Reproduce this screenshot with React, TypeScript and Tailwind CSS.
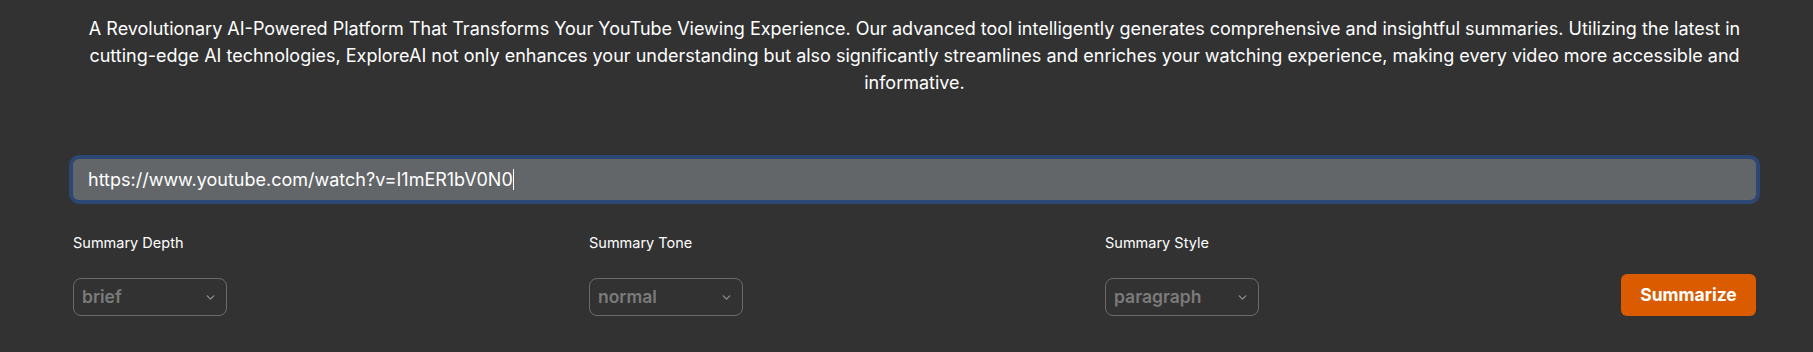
import { ChevronDown } from 'lucide-react';

const options = [
  { label: 'Summary Depth', value: 'brief' },
  { label: 'Summary Tone', value: 'normal' },
  { label: 'Summary Style', value: 'paragraph' },
];

function SelectBox({ label, value }: { label: string; value: string }) {
  return (
    <div className="flex flex-col">
      <span className="text-[14.5px] leading-[20px] text-white">{label}</span>
      <div className="mt-[25px] flex h-[38px] w-[154px] items-center justify-between rounded-lg border border-[#6b6b6b] pl-[8px] pr-[9px]">
        <span className="text-[17.5px] font-semibold text-[#7b7b7b]">{value}</span>
        <ChevronDown size={13} strokeWidth={2.5} className="text-[#8a8a8a]" />
      </div>
    </div>
  );
}

export default function App() {
  return (
    <div
      className="h-[352px] w-full overflow-hidden bg-[#323232] pl-[73px] pr-[57px]"
      style={{ fontFamily: 'Inter, "Noto Sans", sans-serif' }}
    >
      {/* intro */}
      <p className="pt-[15px] text-center text-[18px] leading-[27px] text-white">
        A Revolutionary AI-Powered Platform That Transforms Your YouTube Viewing Experience. Our advanced tool
        intelligently generates comprehensive and insightful summaries. Utilizing the latest in cutting-edge AI
        technologies, ExploreAI not only enhances your understanding but also significantly streamlines and enriches
        your watching experience, making every video more accessible and informative.
      </p>

      {/* url field */}
      <div className="mt-[63px] flex h-[41px] items-center rounded-md bg-[#636669] px-[15px] ring-4 ring-[#2b4773]">
        <span className="text-[18px] text-white">https://www.youtube.com/watch?v=I1mER1bV0N0</span>
        <span className="h-[21px] w-px bg-white" />
      </div>

      {/* options */}
      <div className="mt-[33px] flex items-end justify-between">
        {options.map((o) => (
          <SelectBox key={o.label} label={o.label} value={o.value} />
        ))}
        <button className="h-[42px] w-[135px] rounded-md bg-[#da5b00] text-[17.5px] font-bold text-white">
          Summarize
        </button>
      </div>
    </div>
  );
}
